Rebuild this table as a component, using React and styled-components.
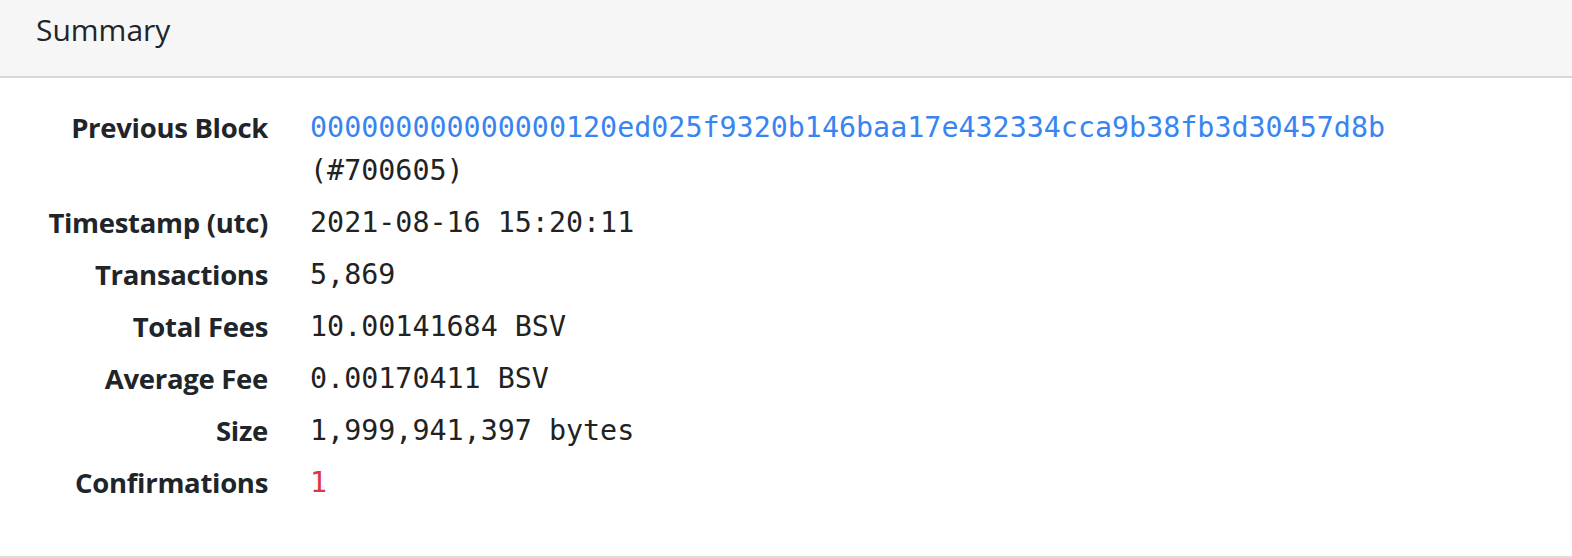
import React from "react";
import styled, { createGlobalStyle } from "styled-components";

const GlobalStyle = createGlobalStyle`
    html, body {
        margin: 0;
        padding: 0;
        background: #fff;
    }
    body {
        font-family: "Open Sans", "Noto Sans", sans-serif;
        color: #212529;
    }
`;

const Card = styled.section`
    width: 1572px;
    height: 558px;
    box-sizing: border-box;
    border-bottom: 2px solid #dedede;
    background: #fff;
`;

const Header = styled.header`
    height: 78px;
    box-sizing: border-box;
    padding: 8px 36px 0;
    background: #f6f6f6;
    border-bottom: 2px solid #d8d8d8;
    font-family: "Open Sans", sans-serif;
    font-size: 30px;
    line-height: 44px;
    color: #212529;
`;

const List = styled.dl`
    display: grid;
    grid-template-columns: 268px 1fr;
    column-gap: 42px;
    row-gap: 9px;
    margin: 0;
    padding: 28px 0 0;
`;

const Term = styled.dt`
    font-family: "Open Sans", "Noto Sans", sans-serif;
    font-weight: 700;
    font-size: 27.5px;
    line-height: 43px;
    letter-spacing: -0.3px;
    text-align: right;
    color: #212529;
`;

const Value = styled.dd`
    margin: 0;
    font-family: "DejaVu Sans Mono", "Liberation Mono", monospace;
    font-size: 28.35px;
    line-height: 43px;
    color: ${(p) => (p.$tone === "danger" ? "#dc3545" : "#222")};
`;

const Link = styled.a`
    display: block;
    color: #3884f0;
    text-decoration: none;
`;

const rows = [
    { label: "Timestamp (utc)", value: "2021-08-16 15:20:11" },
    { label: "Transactions", value: "5,869" },
    { label: "Total Fees", value: "10.00141684 BSV" },
    { label: "Average Fee", value: "0.00170411 BSV" },
    { label: "Size", value: "1,999,941,397 bytes" },
    { label: "Confirmations", value: "1", tone: "danger" }
];

const App = () => {
    return (
        <>
            <GlobalStyle />
            <Card>
                <Header>Summary</Header>
                <List>
                    <Term>Previous Block</Term>
                    <Value>
                        <Link href="#">
                            000000000000000120ed025f9320b146baa17e432334cca9b38fb3d30457d8b
                        </Link>
                        (#700605)
                    </Value>
                    {rows.map((row) => (
                        <React.Fragment key={row.label}>
                            <Term>{row.label}</Term>
                            <Value $tone={row.tone}>{row.value}</Value>
                        </React.Fragment>
                    ))}
                </List>
            </Card>
        </>
    );
};

export default App;
